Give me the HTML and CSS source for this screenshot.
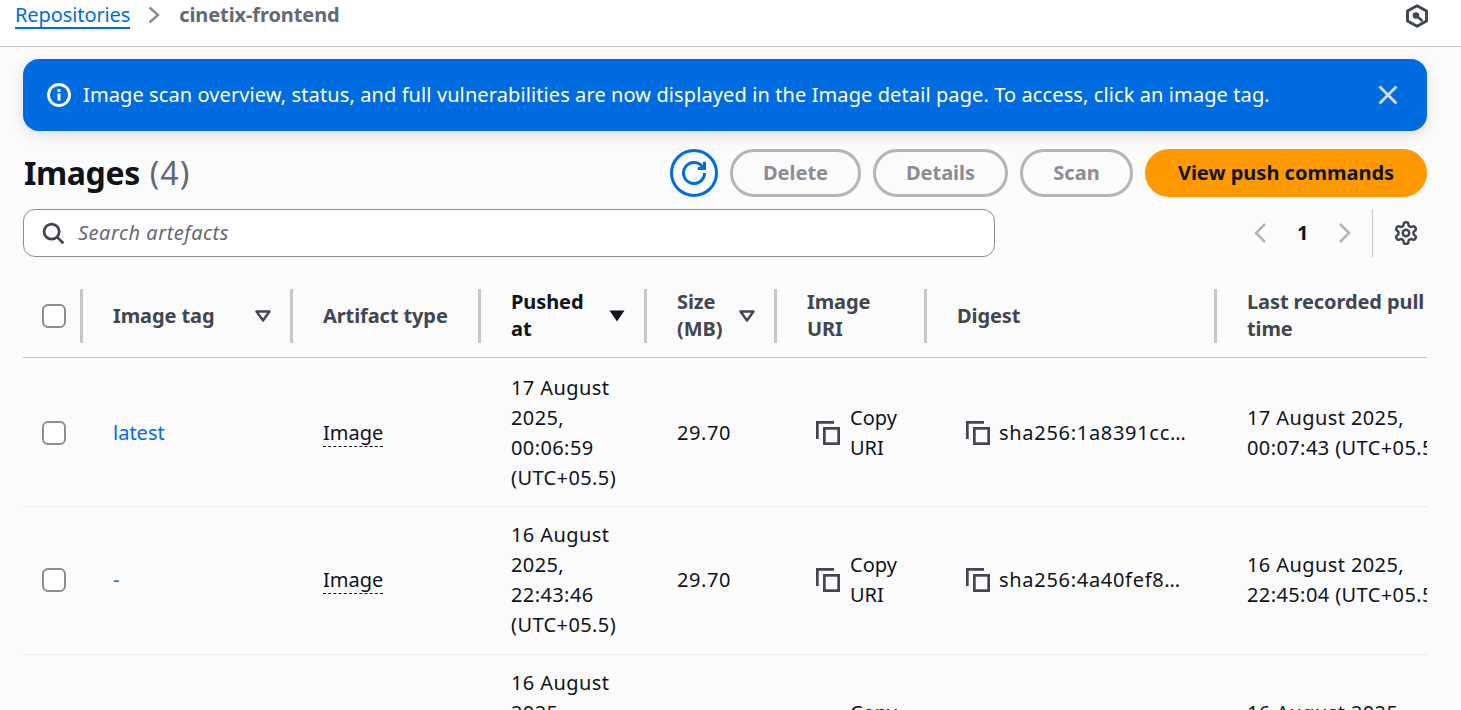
FILE: index.html
```html
<!DOCTYPE html>
<html lang="en">
<head>
  <meta charset="UTF-8" />
  <meta name="viewport" content="width=device-width, initial-scale=1.0"/>
  <title>cinetix-frontend - Images</title>
  <link rel="stylesheet" href="styles.css">
</head>
<body>
  <svg class="defs" width="0" height="0">
    <symbol id="copy" viewBox="0 0 24 24">
      <path d="M1.350 18V1.350H18" fill="none" stroke="currentColor" stroke-width="2.700"/>
      <rect x="8.350" y="7.350" width="14.300" height="15.300" fill="none" stroke="currentColor" stroke-width="2.700"/>
    </symbol>
    <symbol id="caret" viewBox="0 0 16 12">
      <path d="M1.500 1.500h13L8 10.500z" fill="none" stroke="currentColor" stroke-width="2.400" stroke-linejoin="round"/>
    </symbol>
  </svg>

  <header class="topbar">
    <nav class="crumbs">
      <a class="crumb-link">Repositories</a>
      <svg class="crumb-sep" viewBox="0 0 12 18" width="12" height="18"><path d="M1.500 1.500 10 9l-8.500 7.500" fill="none" stroke="currentColor" stroke-width="2.400"/></svg>
      <span class="crumb-current">cinetix-frontend</span>
    </nav>
    <svg class="hex-icon" viewBox="0 0 24 24" width="24" height="24">
      <path d="M12 1.800 21.500 7v10L12 22.200 2.500 17V7z" fill="none" stroke="currentColor" stroke-width="3" stroke-linejoin="round"/>
      <circle cx="11" cy="11.500" r="3.300" fill="currentColor"/>
      <path d="M11 11.500 17.500 17" stroke="currentColor" stroke-width="2.600"/>
    </svg>
  </header>

  <main class="content">
    <div class="alert">
      <svg class="alert-icon" viewBox="0 0 24 24" width="24" height="24">
        <circle cx="12" cy="12" r="10.500" fill="none" stroke="currentColor" stroke-width="2.800"/>
        <path d="M12 10.500v7" stroke="currentColor" stroke-width="3"/>
        <path d="M12 6v3" stroke="currentColor" stroke-width="3"/>
      </svg>
      <span class="alert-text">Image scan overview, status, and full vulnerabilities are now displayed in the Image detail page. To access, click an image tag.</span>
      <svg class="alert-close" viewBox="0 0 20 20" width="20" height="20"><path d="M1.500 1.500l17 17M18.500 1.500l-17 17" stroke="currentColor" stroke-width="2.800"/></svg>
    </div>

    <div class="toolbar">
      <h1 class="title">Images <span class="count">(4)</span></h1>
      <div class="actions">
        <button class="btn-icon">
          <svg viewBox="0 0 16 16" width="24" height="24"><path d="M15 8a7 7 0 1 1-1.200-3.900" fill="none" stroke="currentColor" stroke-width="2"/><path d="M15 .5V5h-4.500" fill="none" stroke="currentColor" stroke-width="2"/></svg>
        </button>
        <button class="btn btn-delete">Delete</button>
        <button class="btn btn-details">Details</button>
        <button class="btn btn-scan">Scan</button>
        <button class="btn btn-primary">View push commands</button>
      </div>
    </div>

    <div class="filter-row">
      <div class="search">
        <svg viewBox="0 0 16 16" width="22" height="22"><circle cx="7" cy="7" r="5.500" fill="none" stroke="currentColor" stroke-width="2"/><path d="M11 11l4.500 4.500" stroke="currentColor" stroke-width="2"/></svg>
        <span class="search-text">Search artefacts</span>
      </div>
      <div class="pager">
        <svg class="chev" viewBox="0 0 14 22" width="14" height="22"><path d="M12 2 3 11l9 9" fill="none" stroke="currentColor" stroke-width="2.500"/></svg>
        <span class="page-num">1</span>
        <svg class="chev" viewBox="0 0 14 22" width="14" height="22"><path d="M2 2l9 9-9 9" fill="none" stroke="currentColor" stroke-width="2.500"/></svg>
      </div>
      <div class="settings">
        <svg viewBox="0 0 24 24" width="26" height="26" fill="none" stroke="currentColor" stroke-width="2.300"><path d="M12.220 2h-.44a2 2 0 0 0-2 2v.18a2 2 0 0 1-1 1.730l-.43.25a2 2 0 0 1-2 0l-.15-.08a2 2 0 0 0-2.730.73l-.22.38a2 2 0 0 0 .73 2.730l.15.1a2 2 0 0 1 1 1.720v.51a2 2 0 0 1-1 1.740l-.15.09a2 2 0 0 0-.73 2.730l.22.38a2 2 0 0 0 2.730.73l.15-.08a2 2 0 0 1 2 0l.43.25a2 2 0 0 1 1 1.730V20a2 2 0 0 0 2 2h.44a2 2 0 0 0 2-2v-.18a2 2 0 0 1 1-1.730l.43-.25a2 2 0 0 1 2 0l.15.08a2 2 0 0 0 2.730-.73l.22-.39a2 2 0 0 0-.73-2.730l-.15-.08a2 2 0 0 1-1-1.740v-.5a2 2 0 0 1 1-1.740l.15-.09a2 2 0 0 0 .73-2.730l-.22-.38a2 2 0 0 0-2.730-.73l-.15.08a2 2 0 0 1-2 0l-.43-.25a2 2 0 0 1-1-1.730V4a2 2 0 0 0-2-2z"/><circle cx="12" cy="12" r="3"/></svg>
      </div>
    </div>

    <div class="table-wrap">
      <table class="images">
        <colgroup>
          <col class="c-check"><col class="c-tag"><col class="c-type"><col class="c-pushed"><col class="c-size"><col class="c-uri"><col class="c-digest"><col class="c-pull">
        </colgroup>
        <thead>
          <tr>
            <th><div class="th-in th-check"><span class="box"></span></div></th>
            <th><div class="th-in">Image tag<svg class="caret" width="16" height="12"><use href="#caret"/></svg></div></th>
            <th><div class="th-in">Artifact type</div></th>
            <th><div class="th-in th-sorted"><span>Pushed<br>at</span><svg class="caret" width="16" height="12" viewBox="0 0 16 12"><path d="M.5.5h15L8 11.500z" fill="currentColor"/></svg></div></th>
            <th><div class="th-in"><span>Size<br>(MB)</span><svg class="caret" width="16" height="12"><use href="#caret"/></svg></div></th>
            <th><div class="th-in"><span>Image<br>URI</span></div></th>
            <th><div class="th-in">Digest</div></th>
            <th><div class="th-in th-last"><span>Last recorded pull<br>time</span></div></th>
          </tr>
        </thead>
        <tbody>
          <tr class="row-first">
            <td class="td-check"><span class="box"></span></td>
            <td><a class="tag-link">latest</a></td>
            <td><span class="dashed">Image</span></td>
            <td class="td-date">17 August 2025, 00:06:59 (UTC+05.5)</td>
            <td class="td-size">29.70</td>
            <td class="td-copy"><div class="copy"><svg width="24" height="24"><use href="#copy"/></svg><span>Copy<br>URI</span></div></td>
            <td class="td-copy"><div class="copy copy-digest"><svg width="24" height="24"><use href="#copy"/></svg><span>sha256:1a8391cc…</span></div></td>
            <td class="td-date td-pull">17 August 2025,<br>00:07:43 (UTC+05.5)</td>
          </tr>
          <tr>
            <td class="td-check"><span class="box"></span></td>
            <td><a class="tag-link">-</a></td>
            <td><span class="dashed">Image</span></td>
            <td class="td-date">16 August 2025, 22:43:46 (UTC+05.5)</td>
            <td class="td-size">29.70</td>
            <td class="td-copy"><div class="copy"><svg width="24" height="24"><use href="#copy"/></svg><span>Copy<br>URI</span></div></td>
            <td class="td-copy"><div class="copy copy-digest"><svg width="24" height="24"><use href="#copy"/></svg><span>sha256:4a40fef8…</span></div></td>
            <td class="td-date td-pull">16 August 2025,<br>22:45:04 (UTC+05.5)</td>
          </tr>
          <tr>
            <td class="td-check"></td>
            <td></td>
            <td></td>
            <td class="td-date">16 August 2025,<br>&nbsp;<br>&nbsp;</td>
            <td></td>
            <td class="td-copy"><div class="copy"><svg width="24" height="24"><use href="#copy"/></svg><span>Copy<br>URI</span></div></td>
            <td class="td-copy"></td>
            <td class="td-date td-pull">16 August 2025,<br>&nbsp;</td>
          </tr>
        </tbody>
      </table>
    </div>
  </main>
</body>
</html>
```

FILE: styles.css
```css
* {
  box-sizing: border-box;
}
html, body {
  height: 100%;
  overflow: hidden;
}
body {
  margin: 0;
  background: #fbfbfb;
  color: #0f141a;
  font-family: "Noto Sans", sans-serif;
  font-size: 20px;
  line-height: 30px;
}
.defs {
  position: absolute;
}

/* top bar */
.topbar {
  display: flex;
  justify-content: space-between;
  height: 47px;
  padding: 3px 32px 0 15px;
  background: #fff;
  border-bottom: 1px solid #c6c6cd;
}
.crumbs {
  display: flex;
  align-items: flex-start;
  height: 26px;
}
.crumb-link {
  color: #006ce0;
  border-bottom: 2px solid #006ce0;
  line-height: 24px;
  letter-spacing: -0.1px;
}
.crumb-sep {
  margin: 3px 19px 0 18px;
  color: #8c8c94;
}
.crumb-current {
  color: #656871;
  font-weight: 700;
  line-height: 24px;
  letter-spacing: -0.1px;
}
.hex-icon {
  color: #424650;
  margin-top: 1px;
}

.content {
  padding: 12px 34px 0 23px;
}

/* banner */
.alert {
  display: flex;
  align-items: center;
  height: 72px;
  padding: 0 29px 0 24px;
  background: #006ce0;
  color: #fff;
  border-radius: 16px;
  box-shadow: 0 4px 14px rgba(0,7,22,0.12);
}
.alert-icon {
  flex: none;
}
.alert-text {
  flex: 1;
  margin-left: 12px;
  letter-spacing: 0.1px;
}
.alert-close {
  color: #dbdbdb;
}

/* heading and buttons */
.toolbar {
  display: flex;
  justify-content: space-between;
  align-items: center;
  height: 48px;
  margin-top: 18px;
}
.title {
  margin: 0 0 0 1px;
  font-size: 32px;
  font-weight: 700;
  line-height: 48px;
  letter-spacing: -0.4px;
}
.count {
  margin-left: 2px;
  font-weight: 400;
  color: #656871;
  letter-spacing: 1px;
}
.actions {
  display: flex;
  gap: 12px;
}
.btn, .btn-icon {
  height: 48px;
  font-family: inherit;
  font-size: 20px;
  font-weight: 700;
  border-radius: 24px;
  background: transparent;
  padding: 0 0 2px;
}
.btn {
  border: 3px solid #b4b4bb;
  color: #8c8c94;
}
.btn-icon {
  display: flex;
  align-items: center;
  justify-content: center;
  width: 48px;
  padding: 0;
  border: 3px solid #006ce0;
  color: #006ce0;
}
.btn-delete { width: 131px; }
.btn-details { width: 135px; }
.btn-scan { width: 113px; }
.btn-primary {
  width: 282px;
  background: #ff9900;
  border-color: #ff9900;
  color: #0f141a;
}

/* search and pager */
.filter-row {
  display: flex;
  align-items: center;
  height: 48px;
  margin-top: 12px;
}
.search {
  display: flex;
  align-items: center;
  gap: 14px;
  width: 972px;
  height: 48px;
  padding-left: 18px;
  background: #fff;
  border: 1px solid #8c8c94;
  border-radius: 12px;
  color: #424650;
}
.search-text {
  font-style: italic;
  color: #656871;
  letter-spacing: 0.5px;
}
.pager {
  display: flex;
  align-items: center;
  gap: 30px;
  margin-left: 258px;
  color: #b4b4bb;
}
.page-num {
  color: #0f141a;
  font-weight: 700;
}
.settings {
  display: flex;
  align-items: center;
  height: 48px;
  margin-left: 20px;
  padding-left: 20px;
  border-left: 1px solid #c6c6cd;
  color: #424650;
}

/* table */
.table-wrap {
  margin-top: 22px;
  overflow: hidden;
}
.images {
  table-layout: fixed;
  border-collapse: separate;
  border-spacing: 0;
  width: 1454px;
}
.c-check { width: 60px; }
.c-tag { width: 210px; }
.c-type { width: 188px; }
.c-pushed { width: 166px; }
.c-size { width: 130px; }
.c-uri { width: 150px; }
.c-digest { width: 290px; }
.c-pull { width: 260px; }

th {
  height: 79px;
  padding: 10px 0 14px;
  border-bottom: 1px solid #c6c6cd;
  text-align: left;
  font-weight: 700;
  color: #424650;
  line-height: 27px;
  letter-spacing: -0.1px;
}
.th-in {
  display: flex;
  justify-content: space-between;
  align-items: center;
  height: 54px;
  padding: 0 19px 2px 30px;
  border-right: 3px solid #c6c6cd;
}
.th-check {
  padding: 0 0 0 19px;
}
.th-sorted {
  color: #0f141a;
}
.th-last {
  border-right: 0;
  padding-right: 0;
  justify-content: flex-start;
}
.caret {
  flex: none;
  margin-top: 2px;
}
.box {
  display: block;
  width: 24px;
  height: 24px;
  background: #fff;
  border: 2px solid #8c8c94;
  border-radius: 6px;
}

td {
  padding: 13px 20px 14px 30px;
  border-bottom: 1px solid #e9ebed;
  vertical-align: middle;
}
.row-first td {
  padding-top: 15px;
  padding-bottom: 13px;
}
td.td-check {
  padding-left: 19px;
  padding-right: 0;
}
.tag-link {
  color: #006ce0;
}
.dashed {
  border-bottom: 1px dashed #0f141a;
}
.td-date {
  letter-spacing: 0.4px;
}
.td-size {
  letter-spacing: 0.6px;
}
td.td-copy {
  padding-left: 39px;
  padding-right: 0;
}
.copy {
  display: flex;
  align-items: center;
  gap: 10px;
}
.copy svg {
  flex: none;
  color: #424650;
}
.copy-digest {
  gap: 9px;
  white-space: nowrap;
  letter-spacing: 0.7px;
}
td.td-pull {
  padding-right: 0;
  white-space: nowrap;
}
```
